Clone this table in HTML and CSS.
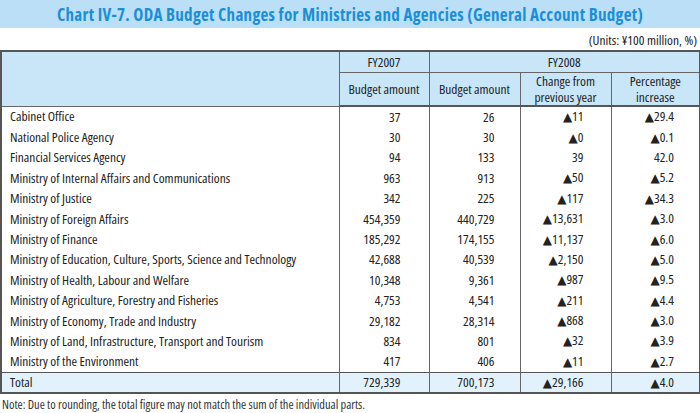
FILE: index.html
```html
<!DOCTYPE html>
<html>
<head>
<meta charset="utf-8">
<link rel="stylesheet" href="styles.css">
</head>
<body>
<div class="page">
  <div class="title-bar"><h1 class="title">Chart IV-7. ODA Budget Changes for Ministries and Agencies (General Account Budget)</h1></div>
  <div class="units">(Units: ¥100 million, %)</div>
  <table class="tbl">
    <colgroup>
      <col class="c-name"><col class="c-a"><col class="c-b"><col class="c-c"><col class="c-d">
    </colgroup>
    <thead>
      <tr class="h1">
        <th rowspan="2" class="blank"></th>
        <th>FY2007</th>
        <th colspan="3">FY2008</th>
      </tr>
      <tr class="h2">
        <th>Budget amount</th>
        <th>Budget amount</th>
        <th><span class="hl">Change from</span><span class="hl">previous year</span></th>
        <th><span class="hl">Percentage</span><span class="hl">increase</span></th>
      </tr>
    </thead>
    <tbody>
      <tr><td class="name">Cabinet Office</td><td class="n1">37</td><td class="n2">26</td><td class="n3"><span class="tri">▲</span>11</td><td class="n4"><span class="tri">▲</span>29.4</td></tr>
      <tr><td class="name">National Police Agency</td><td class="n1">30</td><td class="n2">30</td><td class="n3"><span class="tri">▲</span>0</td><td class="n4"><span class="tri">▲</span>0.1</td></tr>
      <tr><td class="name">Financial Services Agency</td><td class="n1">94</td><td class="n2">133</td><td class="n3">39</td><td class="n4">42.0</td></tr>
      <tr><td class="name">Ministry of Internal Affairs and Communications</td><td class="n1">963</td><td class="n2">913</td><td class="n3"><span class="tri">▲</span>50</td><td class="n4"><span class="tri">▲</span>5.2</td></tr>
      <tr><td class="name">Ministry of Justice</td><td class="n1">342</td><td class="n2">225</td><td class="n3"><span class="tri">▲</span>117</td><td class="n4"><span class="tri">▲</span>34.3</td></tr>
      <tr><td class="name">Ministry of Foreign Affairs</td><td class="n1">454,359</td><td class="n2">440,729</td><td class="n3"><span class="tri">▲</span>13,631</td><td class="n4"><span class="tri">▲</span>3.0</td></tr>
      <tr><td class="name">Ministry of Finance</td><td class="n1">185,292</td><td class="n2">174,155</td><td class="n3"><span class="tri">▲</span>11,137</td><td class="n4"><span class="tri">▲</span>6.0</td></tr>
      <tr><td class="name">Ministry of Education, Culture, Sports, Science and Technology</td><td class="n1">42,688</td><td class="n2">40,539</td><td class="n3"><span class="tri">▲</span>2,150</td><td class="n4"><span class="tri">▲</span>5.0</td></tr>
      <tr><td class="name">Ministry of Health, Labour and Welfare</td><td class="n1">10,348</td><td class="n2">9,361</td><td class="n3"><span class="tri">▲</span>987</td><td class="n4"><span class="tri">▲</span>9.5</td></tr>
      <tr><td class="name">Ministry of Agriculture, Forestry and Fisheries</td><td class="n1">4,753</td><td class="n2">4,541</td><td class="n3"><span class="tri">▲</span>211</td><td class="n4"><span class="tri">▲</span>4.4</td></tr>
      <tr><td class="name">Ministry of Economy, Trade and Industry</td><td class="n1">29,182</td><td class="n2">28,314</td><td class="n3"><span class="tri">▲</span>868</td><td class="n4"><span class="tri">▲</span>3.0</td></tr>
      <tr><td class="name">Ministry of Land, Infrastructure, Transport and Tourism</td><td class="n1">834</td><td class="n2">801</td><td class="n3"><span class="tri">▲</span>32</td><td class="n4"><span class="tri">▲</span>3.9</td></tr>
      <tr><td class="name">Ministry of the Environment</td><td class="n1">417</td><td class="n2">406</td><td class="n3"><span class="tri">▲</span>11</td><td class="n4"><span class="tri">▲</span>2.7</td></tr>
      <tr class="total"><td class="name">Total</td><td class="n1">729,339</td><td class="n2">700,173</td><td class="n3"><span class="tri">▲</span>29,166</td><td class="n4"><span class="tri">▲</span>4.0</td></tr>
    </tbody>
  </table>
  <p class="note">Note: Due to rounding, the total figure may not match the sum of the individual parts.</p>
</div>
</body>
</html>
```

FILE: styles.css
```css
html, body {
  margin: 0;
  padding: 0;
  background: #ffffff;
}
.page {
  width: 700px;
  font-family: "Open Sans", "Liberation Sans", sans-serif;
  font-stretch: 75%;
  color: #222;
  display: flex;
  flex-direction: column;
}
.title-bar {
  height: 28px;
  background: #bbdff6;
  display: flex;
  align-items: center;
  justify-content: center;
}
.title {
  margin: 0;
  font-size: 17px;
  font-weight: 700;
  font-stretch: 75%;
  letter-spacing: 0.3px;
  color: #1a8fd8;
}
.units {
  height: 22px;
  box-sizing: border-box;
  padding-top: 5px;
  padding-right: 3px;
  text-align: right;
  font-size: 13.4px;
  line-height: 15px;
}
.tbl {
  width: 699px;
  border-collapse: collapse;
  border: 2px solid #555;
  font-size: 13.4px;
  table-layout: fixed;
}
.c-name { width: 338px; }
.c-a { width: 90px; }
.c-b { width: 91px; }
.c-c { width: 91px; }
.c-d { width: 89px; }
.tbl th {
  background: #c8e6f8;
  font-weight: normal;
  border: 1px solid #666;
  padding: 0;
  line-height: 15px;
  text-align: center;
}
.hl {
  display: block;
  line-height: 16px;
}
.h1 th { height: 20px; }
.h2 th { height: 32px; border-bottom: 2px solid #555; }
.tbl td {
  padding: 0;
  height: 20.4px;
  line-height: 15px;
  border-left: 1px solid #666;
  border-right: 1px solid #666;
  white-space: nowrap;
}
.tri {
  font-family: "DejaVu Sans", sans-serif;
  font-stretch: 100%;
  font-size: 12px;
}
.tbl td.name { padding-left: 8px; }
.tbl td.n1 { text-align: right; padding-right: 28px; }
.tbl td.n2 { text-align: right; padding-right: 25px; }
.tbl td.n3 { text-align: right; padding-right: 27px; }
.tbl td.n4 { text-align: right; padding-right: 25px; }
.tbl tr.total td {
  background: #e2f2fc;
  border-top: 1px solid #555;
  height: 19px;
}
.note {
  margin: 4px 0 0 2px;
  font-size: 12.4px;
  line-height: 14px;
  color: #333;
}
```
